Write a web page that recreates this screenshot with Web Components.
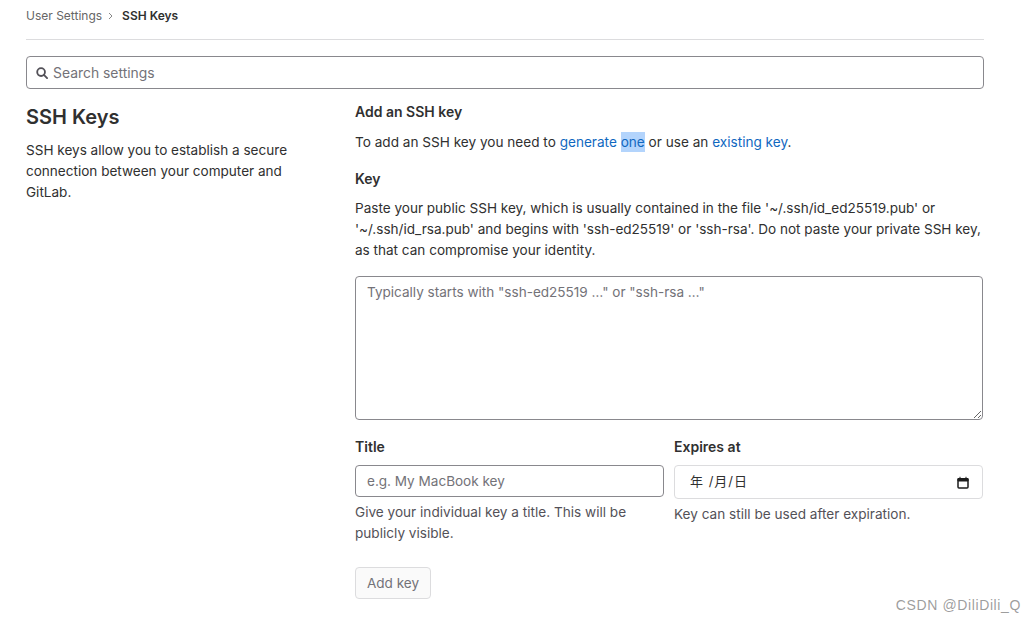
<!DOCTYPE html>
<html lang="en">
<head>
<meta charset="utf-8">
<title>SSH Keys</title>
<style>
  html, body { margin: 0; background: #fff; }
  body {
    font: 13.55px/21px Inter, "Noto Sans CJK SC", sans-serif;
    color: #303030;
    width: 1035px;
    height: 622px;
    overflow: hidden;
  }
</style>
</head>
<body>
<gl-page>
  <gl-breadcrumb parent="User Settings" current="SSH Keys"></gl-breadcrumb>
  <gl-search placeholder="Search settings"></gl-search>
  <gl-settings-section heading="SSH Keys" description="SSH keys allow you to establish a secure connection between your computer and GitLab.">
    <gl-key-form></gl-key-form>
  </gl-settings-section>
</gl-page>
<gl-watermark>CSDN @DiliDili_Q</gl-watermark>

<script>
class GlPage extends HTMLElement {
  constructor() {
    super();
    this.attachShadow({mode:'open'});
    this.shadowRoot.innerHTML = `
      <style>
        :host {
          display: block;
          box-sizing: border-box;
          width: 1035px;
          padding: 0 51px 0 26px;
        }
      </style>
      <slot></slot>
    `;
  }
}

class GlBreadcrumb extends HTMLElement {
  constructor() {
    super();
    this.attachShadow({mode:'open'});
    this.shadowRoot.innerHTML = `
      <style>
        :host {
          display: flex;
          align-items: center;
          box-sizing: border-box;
          height: 40px;
          padding-bottom: 7px;
          border-bottom: 1px solid #dcdcde;
          font-size: 12px;
          line-height: 16px;
        }
        span { color: #666; }
        svg { margin: 0 9px 0 6px; width: 5px; height: 8px; }
        b { font-weight: 600; color: #303030; }
      </style>
      <span>${this.getAttribute('parent')}</span>
      <svg viewBox="0 0 5 8"><path d="M1 1l3 3-3 3" fill="none" stroke="#888" stroke-width="1"/></svg>
      <b>${this.getAttribute('current')}</b>
    `;
  }
}

class GlSearch extends HTMLElement {
  constructor() {
    super();
    this.attachShadow({mode:'open'});
    this.shadowRoot.innerHTML = `
      <style>
        :host {
          display: flex;
          align-items: center;
          gap: 5px;
          box-sizing: border-box;
          height: 33px;
          margin-top: 16px;
          padding: 0 9px;
          border: 1px solid #89888d;
          border-radius: 4px;
        }
        svg { width: 12px; height: 12px; flex: none; }
        input {
          flex: 1;
          min-width: 0;
          border: 0;
          outline: 0;
          padding: 2px 0 0;
          background: none;
          font: inherit;
          font-size: 13.9px;
          color: #303030;
        }
        input::placeholder { color: #737278; opacity: 1; }
      </style>
      <svg viewBox="0 0 13 13"><circle cx="5.5" cy="5.5" r="4.2" fill="none" stroke="#535158" stroke-width="2"/><path d="M8.6 8.600l3.400 3.400" stroke="#535158" stroke-width="2" stroke-linecap="round"/></svg>
      <input type="search" placeholder="${this.getAttribute('placeholder')}">
    `;
  }
}

class GlSettingsSection extends HTMLElement {
  constructor() {
    super();
    this.attachShadow({mode:'open'});
    this.shadowRoot.innerHTML = `
      <style>
        :host {
          display: grid;
          grid-template-columns: 329px 1fr;
          margin-top: 12px;
        }
        h2 {
          margin: 0 0 10px;
          padding-top: 4px;
          font-size: 20px;
          line-height: 25px;
          font-weight: 600;
          color: #303030;
        }
        p { margin: 0; width: 280px; }
      </style>
      <div>
        <h2>${this.getAttribute('heading')}</h2>
        <p>${this.getAttribute('description')}</p>
      </div>
      <div><slot></slot></div>
    `;
  }
}

class GlField extends HTMLElement {
  constructor() {
    super();
    this.attachShadow({mode:'open'});
    this.shadowRoot.innerHTML = `
      <style>
        :host { display: block; min-width: 0; }
        label { display: block; font-size: 14px; font-weight: 600; margin-bottom: 8px; }
        .help { color: #535158; margin-top: 5px; font-size: 13.6px; }
      </style>
      <label>${this.getAttribute('label')}</label>
      <slot></slot>
      <div class="help"><slot name="help"></slot></div>
    `;
  }
}

class GlKeyForm extends HTMLElement {
  constructor() {
    super();
    this.attachShadow({mode:'open'});
    this.shadowRoot.innerHTML = `
      <style>
        :host { display: block; width: 628px; }
        h3 { margin: 0 0 10px; font-size: 14px; line-height: 21px; font-weight: 600; }
        p { margin: 0; }
        .intro { font-size: 13.6px; }
        a { color: #1068bf; text-decoration: none; }
        a mark { background: #b3d4fc; color: inherit; display: inline-block; line-height: 20px; }
        .key-label { font-size: 14px; font-weight: 600; margin: 15px 0 9px; }
        textarea, input {
          display: block;
          box-sizing: border-box;
          width: 100%;
          margin: 0;
          border: 1px solid #89888d;
          border-radius: 4px;
          background: #fff;
          outline: 0;
          font: inherit;
          color: #303030;
          padding: 0 11px;
        }
        textarea { height: 144px; margin-top: 15px; padding-top: 5px; padding-bottom: 5px; }
        input { height: 32px; }
        ::placeholder { color: #737278; opacity: 1; }
        .row {
          display: grid;
          grid-template-columns: 309px 309px;
          column-gap: 10px;
          margin-top: 16px;
        }
        .date {
          display: flex;
          align-items: center;
          justify-content: space-between;
          box-sizing: border-box;
          height: 34px;
          padding: 0 13px 0 15px;
          border: 1px solid #dcdcde;
          border-radius: 4px;
          color: #303030;
        }
        .date span { white-space: pre; font-size: 13px; letter-spacing: 1px; margin-top: -2px; }
        .date svg { width: 12px; height: 13px; }
        button {
          display: block;
          box-sizing: border-box;
          height: 32px;
          width: 76px;
          margin-top: 23px;
          padding: 0;
          border: 1px solid #dcdcde;
          border-radius: 4px;
          background: #fafafa;
          color: #737278;
          font: inherit;
        }
      </style>
      <h3>Add an SSH key</h3>
      <p class="intro">To add an SSH key you need to <a href="#">generate <mark>one</mark></a> or use an <a href="#">existing key</a>.</p>
      <div class="key-label">Key</div>
      <p>Paste your public SSH key, which is usually contained in the file '~/.ssh/id_ed25519.pub' or '~/.ssh/id_rsa.pub' and begins with 'ssh-ed25519' or 'ssh-rsa'. Do not paste your private SSH key, as that can compromise your identity.</p>
      <textarea placeholder='Typically starts with "ssh-ed25519 …" or "ssh-rsa …"'></textarea>
      <div class="row">
        <gl-field label="Title">
          <input type="text" placeholder="e.g. My MacBook key">
          <span slot="help">Give your individual key a title. This will be publicly visible.</span>
        </gl-field>
        <gl-field label="Expires at">
          <div class="date">
            <span>年 /月/日</span>
            <svg viewBox="0 0 12 13"><path d="M1.500 3h9a.5.5 0 0 1 .5.5v7.500a1 1 0 0 1-1 1H2a1 1 0 0 1-1-1V3.500a.5.5 0 0 1 .5-.5z" fill="none" stroke="#1c1c1c" stroke-width="1.500"/><path d="M1 2.500h10V5H1zM3 .8v2M9 .8v2" fill="#1c1c1c" stroke="#1c1c1c"/></svg>
          </div>
          <span slot="help">Key can still be used after expiration.</span>
        </gl-field>
      </div>
      <button type="button">Add key</button>
    `;
  }
}

class GlWatermark extends HTMLElement {
  constructor() {
    super();
    this.attachShadow({mode:'open'});
    this.shadowRoot.innerHTML = `
      <style>
        :host {
          position: absolute;
          right: 14px;
          top: 595px;
          font: 14px/20px "Liberation Sans", sans-serif;
          letter-spacing: .62px;
          color: rgba(90, 90, 90, .6);
        }
      </style>
      <slot></slot>
    `;
  }
}

customElements.define('gl-page', GlPage);
customElements.define('gl-breadcrumb', GlBreadcrumb);
customElements.define('gl-search', GlSearch);
customElements.define('gl-settings-section', GlSettingsSection);
customElements.define('gl-field', GlField);
customElements.define('gl-key-form', GlKeyForm);
customElements.define('gl-watermark', GlWatermark);
</script>
</body>
</html>
